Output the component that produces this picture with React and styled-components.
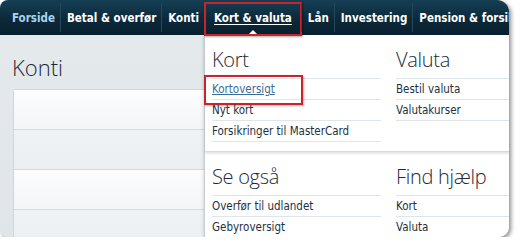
import React from "react";
import styled, { createGlobalStyle } from "styled-components";

const GlobalStyle = createGlobalStyle`
  html, body {
    margin: 0;
    padding: 0;
    background: #ffffff;
  }
  body {
    font-family: "DejaVu Sans Condensed", "DejaVu Sans", Verdana, sans-serif;
  }
`;

const navItems = [
  { label: "Forside", first: true, color: "#a9d4f2" },
  { label: "Betal & overfør" },
  { label: "Konti" },
  { label: "Kort & valuta", active: true },
  { label: "Lån" },
  { label: "Investering" },
  { label: "Pension & forsikring" },
];

const menu = [
  {
    title: "Kort",
    links: [
      { label: "Kortoversigt", marked: true },
      { label: "Nyt kort" },
      { label: "Forsikringer til MasterCard" },
    ],
  },
  {
    title: "Valuta",
    links: [{ label: "Bestil valuta" }, { label: "Valutakurser" }],
  },
];

const more = [
  {
    title: "Se også",
    links: [{ label: "Overfør til udlandet" }, { label: "Gebyroversigt" }],
  },
  {
    title: "Find hjælp",
    links: [{ label: "Kort" }, { label: "Valuta" }],
  },
];

export default function App() {
  return (
    <>
      <GlobalStyle />
      <Window>
        <NavBar>
          {navItems.map((item) => (
            <NavItem
              key={item.label}
              $first={item.first}
              $active={item.active}
              $color={item.color}
            >
              {item.label}
            </NavItem>
          ))}
        </NavBar>
        <Body>
          <Side>
            <PageTitle>Konti</PageTitle>
            <AccountPanel>
              <AccountRow />
              <AccountRow $shade />
              <AccountRow />
              <AccountRow $shade />
            </AccountPanel>
          </Side>
          <Dropdown>
            <Section $divider>
              {menu.map((col, i) => (
                <Column key={col.title} $wide={i === 0}>
                  <ColumnTitle>{col.title}</ColumnTitle>
                  <LinkList>
                    {col.links.map((l) => (
                      <LinkItem key={l.label} $marked={l.marked}>
                        <MenuLink $marked={l.marked}>{l.label}</MenuLink>
                      </LinkItem>
                    ))}
                  </LinkList>
                </Column>
              ))}
            </Section>
            <Section>
              {more.map((col, i) => (
                <Column key={col.title} $wide={i === 0}>
                  <ColumnTitle>{col.title}</ColumnTitle>
                  <LinkList>
                    {col.links.map((l) => (
                      <LinkItem key={l.label}>
                        <MenuLink>{l.label}</MenuLink>
                      </LinkItem>
                    ))}
                  </LinkList>
                </Column>
              ))}
            </Section>
          </Dropdown>
        </Body>
      </Window>
    </>
  );
}

const Window = styled.div`
  width: 509px;
  height: 237px;
  border-radius: 8px 12px 10px 8px;
  overflow: hidden;
  box-shadow: 2px 2px 4px rgba(0, 0, 0, 0.45);
  display: flex;
  flex-direction: column;
  background: #e1e7ea;
`;

const NavBar = styled.nav`
  height: 35px;
  flex: none;
  display: flex;
  align-items: stretch;
  background: linear-gradient(#153f55, #0c293a 55%, #08202e);
  position: relative;
  z-index: 2;
`;

const NavItem = styled.div`
  position: relative;
  display: flex;
  align-items: center;
  white-space: nowrap;
  padding: 0 ${(p) => (p.$active ? "9px" : "5px")} 0
    ${(p) => (p.$first ? "12px" : p.$active ? "9px" : "6px")};
  border-left: ${(p) => (p.$first ? "none" : "1px solid #27475a")};
  margin-top: 3px;
  margin-bottom: 3px;
  font-size: 11.5px;
  font-weight: bold;
  color: ${(p) => p.$color || "#ffffff"};
  text-decoration: ${(p) => (p.$active ? "underline" : "none")};
  text-underline-offset: 2px;

  ${(p) =>
    p.$active &&
    `
    &::after {
      content: "";
      position: absolute;
      left: -1px;
      right: -1px;
      top: -1px;
      bottom: -4px;
      border: 2px solid #c7242c;
      box-shadow: 1px 1px 2px rgba(0, 0, 0, 0.35);
    }
    &::before {
      content: "";
      position: absolute;
      left: 50%;
      bottom: -3px;
      margin-left: -5px;
      border-left: 5px solid transparent;
      border-right: 5px solid transparent;
      border-bottom: 5px solid #ffffff;
    }
  `}
`;

const Body = styled.div`
  flex: 1;
  display: flex;
  min-height: 0;
`;

const Side = styled.div`
  width: 204px;
  flex: none;
  padding: 20px 0 0 13px;
  box-sizing: border-box;
  background: linear-gradient(#e4e9ec, #dfe5e9);
  display: flex;
  flex-direction: column;
`;

const PageTitle = styled.h1`
  margin: 0 0 9px -1px;
  font-family: "Open Sans", "Lato", sans-serif;
  font-weight: 300;
  font-size: 22px;
  line-height: 25px;
  color: #1c2a36;
`;

const AccountPanel = styled.div`
  flex: 1;
  margin-right: -4px;
  border: 1px solid #cdd6db;
  border-right: none;
  border-bottom: none;
  border-radius: 3px 0 0 0;
  display: flex;
  flex-direction: column;
  background: #f4f6f7;
`;

const AccountRow = styled.div`
  height: 39px;
  flex: none;
  border-bottom: 1px solid #d3dbe0;
  background: ${(p) =>
    p.$shade
      ? "linear-gradient(#f0f3f5, #ebeff2)"
      : "linear-gradient(#fdfdfe, #f3f5f7)"};
`;

const Dropdown = styled.div`
  flex: 1;
  display: flex;
  flex-direction: column;
  background: #ffffff;
  border-left: 1px solid #c5cdd2;
  box-shadow: -1px 0 3px rgba(0, 0, 0, 0.12);
  position: relative;
  z-index: 1;
`;

const Section = styled.div`
  display: flex;
  gap: 15px;
  padding: 12px 0 0 7px;
  height: ${(p) => (p.$divider ? "117px" : "auto")};
  flex: ${(p) => (p.$divider ? "none" : "1")};
  box-sizing: border-box;
  border-bottom: ${(p) => (p.$divider ? "1px solid #d5dadd" : "none")};
  box-shadow: ${(p) => (p.$divider ? "0 2px 2px rgba(0, 0, 0, 0.1)" : "none")};
`;

const Column = styled.div`
  width: ${(p) => (p.$wide ? "169px" : "auto")};
  flex: ${(p) => (p.$wide ? "none" : "1")};
`;

const ColumnTitle = styled.h2`
  margin: 0 0 6px 0;
  font-family: "Open Sans", "Lato", sans-serif;
  font-weight: 300;
  font-size: 20px;
  line-height: 25px;
  color: #1d2a37;
  letter-spacing: -0.3px;
`;

const LinkList = styled.ul`
  list-style: none;
  margin: 0;
  padding: 0;
  border-top: 1px solid #dfe6eb;
`;

const LinkItem = styled.li`
  position: relative;
  height: 20px;
  display: flex;
  align-items: center;
  border-bottom: 1px solid #dfe6eb;

  ${(p) =>
    p.$marked &&
    `
    &::after {
      content: "";
      position: absolute;
      left: -8px;
      width: 95px;
      top: -4px;
      bottom: -6px;
      border: 2px solid #c7242c;
      box-shadow: 1px 1px 2px rgba(0, 0, 0, 0.3);
    }
  `}
`;

const MenuLink = styled.a`
  font-size: 11.5px;
  color: ${(p) => (p.$marked ? "#3a6b97" : "#1c3044")};
  text-decoration: ${(p) => (p.$marked ? "underline" : "none")};
  text-underline-offset: 1px;
  white-space: nowrap;
`;
